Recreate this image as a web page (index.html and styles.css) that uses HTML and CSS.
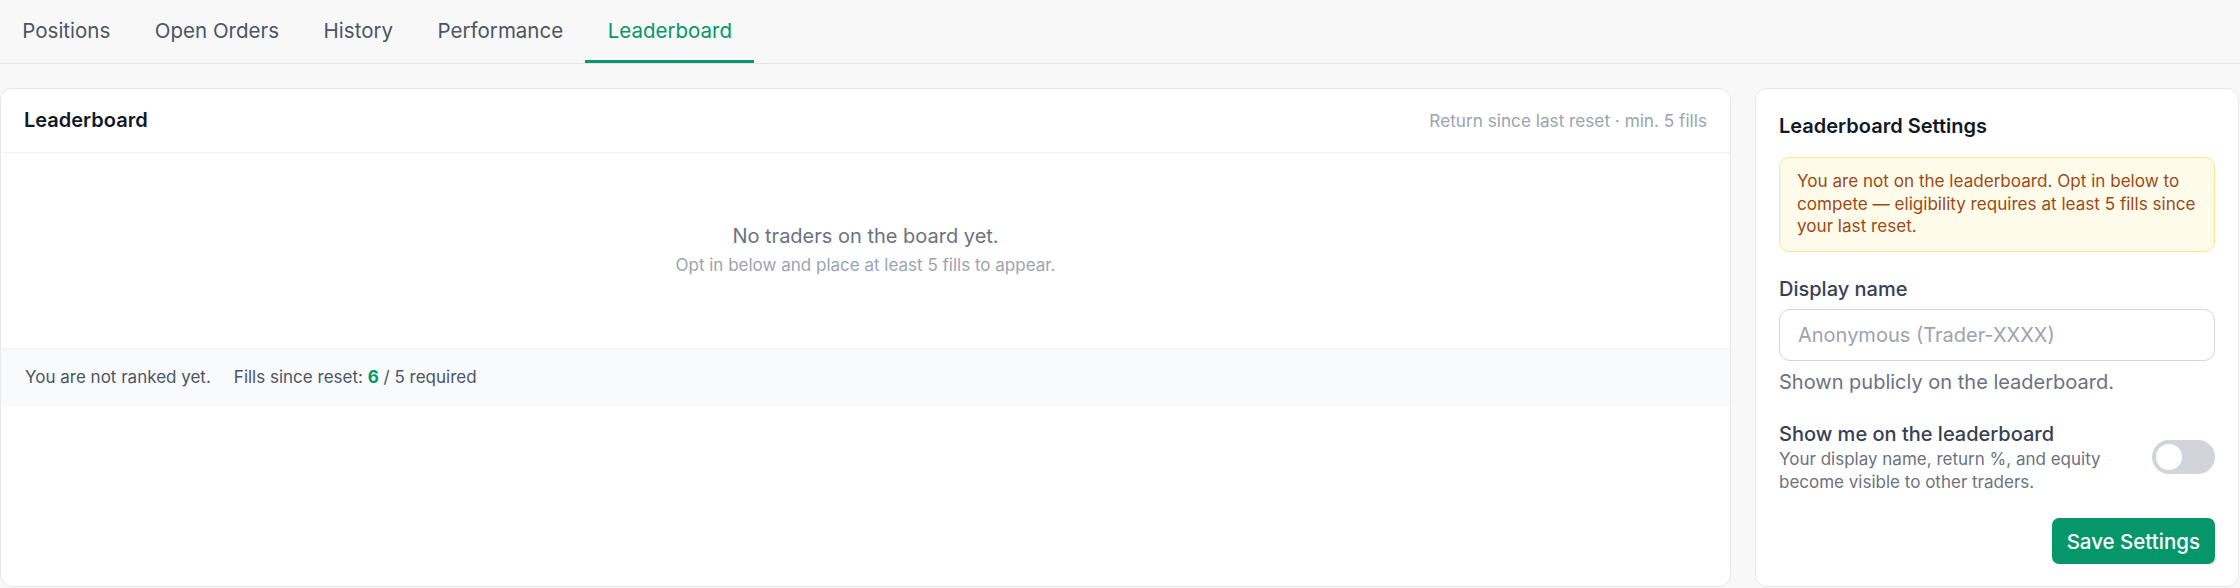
FILE: index.html
```html
<!DOCTYPE html>
<html lang="en">
<head>
<meta charset="utf-8">
<title>Leaderboard</title>
<link rel="stylesheet" href="styles.css">
</head>
<body>
  <nav class="tabs">
    <button class="tab">Positions</button>
    <button class="tab">Open Orders</button>
    <button class="tab">History</button>
    <button class="tab">Performance</button>
    <button class="tab tab-active">Leaderboard</button>
  </nav>

  <main class="layout">
    <section class="card board">
      <header class="board-head">
        <h2 class="card-title">Leaderboard</h2>
        <span class="board-meta">Return since last reset · min. 5 fills</span>
      </header>
      <div class="empty">
        <p class="empty-title">No traders on the board yet.</p>
        <p class="empty-sub">Opt in below and place at least 5 fills to appear.</p>
      </div>
      <div class="rank-strip">
        <span>You are not ranked yet.</span>
        <span>Fills since reset: <strong class="fills-ok">6</strong> / 5 required</span>
      </div>
    </section>

    <aside class="card settings">
      <h2 class="card-title">Leaderboard Settings</h2>
      <div class="notice">You are not on the leaderboard. Opt in below to compete — eligibility requires at least 5 fills since your last reset.</div>

      <label class="field-label" for="display-name">Display name</label>
      <input class="field-input" id="display-name" type="text" placeholder="Anonymous (Trader-XXXX)">
      <p class="field-help">Shown publicly on the leaderboard.</p>

      <div class="opt-row">
        <div class="opt-text">
          <div class="opt-title">Show me on the leaderboard</div>
          <div class="opt-desc">Your display name, return %, and equity become visible to other traders.</div>
        </div>
        <span class="switch" role="switch" aria-checked="false"><span class="switch-knob"></span></span>
      </div>

      <div class="actions">
        <button class="btn-save">Save Settings</button>
      </div>
    </aside>
  </main>
</body>
</html>
```

FILE: styles.css
```css
* {
  box-sizing: border-box;
}

html,
body {
  margin: 0;
  padding: 0;
}

body {
  background: #f8f8f8;
  font-family: Inter, "Noto Sans", "Liberation Sans", sans-serif;
  color: #111827;
  height: 588px;
  overflow: hidden;
}

p,
h2 {
  margin: 0;
}

/* ---- tab bar ---- */
.tabs {
  display: flex;
  height: 64px;
  border-bottom: 1px solid #e4e4e4;
  background: #f8f8f8;
}

.tab {
  display: flex;
  align-items: center;
  padding: 0 22.3px;
  border: 0;
  border-bottom: 3px solid transparent;
  background: none;
  font-family: inherit;
  font-size: 20.5px;
  color: #4b5563;
  cursor: pointer;
}

.tab-active {
  color: #059669;
  border-bottom-color: #059669;
}

/* ---- page grid ---- */
.layout {
  display: grid;
  grid-template-columns: 1fr 484px;
  gap: 24px;
  padding: 24px 1px 0 0;
  align-items: stretch;
}

.card {
  background: #fff;
  border: 1px solid #e5e7eb;
  border-radius: 12px;
  height: 499px;
}

.card-title {
  font-size: 20px;
  font-weight: 600;
  line-height: 28px;
  color: #111827;
}

/* ---- leaderboard card ---- */
.board {
  display: flex;
  flex-direction: column;
  overflow: hidden;
}

.board-head {
  display: flex;
  align-items: center;
  justify-content: space-between;
  padding: 17px 23px 18px;
  border-bottom: 1px solid #f1f2f4;
}

.board-meta {
  font-size: 17.2px;
  color: #9ca3af;
}

.empty {
  padding: 69px 24px 71px;
  text-align: center;
}

.empty-title {
  font-size: 20px;
  line-height: 28px;
  color: #6b7280;
}

.empty-sub {
  margin-top: 3px;
  font-size: 17px;
  line-height: 24px;
  color: #9ca3af;
}

.rank-strip {
  display: flex;
  gap: 23px;
  padding: 15px 24px 16px;
  background: #f8fafc;
  border-top: 1px solid #f1f5f9;
  font-size: 17px;
  line-height: 26px;
  color: #4b5563;
}

.fills-ok {
  color: #059669;
  font-weight: 700;
}

/* ---- settings card ---- */
.settings {
  padding: 23px 23px 22px;
  display: flex;
  flex-direction: column;
}

.notice {
  margin-top: 17px;
  padding: 12px 17px 13px;
  background: #fffbeb;
  border: 1px solid #fde68a;
  border-radius: 10px;
  font-size: 17.1px;
  line-height: 22.5px;
  color: #9c4a14;
}

.field-label {
  margin-top: 23px;
  font-size: 20px;
  font-weight: 500;
  line-height: 28px;
  color: #374151;
}

.field-input {
  margin-top: 6px;
  height: 54px;
  padding: 0 18px;
  border: 1.5px solid #d1d5db;
  border-radius: 11px;
  font-family: inherit;
  font-size: 20px;
  color: #111827;
  background: #fff;
}

.field-input::placeholder {
  color: #9ca3af;
}

.field-help {
  margin-top: 8px;
  font-size: 20px;
  line-height: 26px;
  color: #6b7280;
}

.opt-row {
  margin-top: 25px;
  display: flex;
  align-items: center;
  justify-content: space-between;
  gap: 16px;
}

.opt-title {
  font-size: 20px;
  font-weight: 500;
  line-height: 28px;
  color: #374151;
}

.opt-desc {
  font-size: 17px;
  line-height: 23px;
  color: #6b7280;
  max-width: 340px;
}

.switch {
  position: relative;
  flex: none;
  width: 63px;
  height: 34px;
  border-radius: 17px;
  background: #d1d5db;
}

.switch-knob {
  position: absolute;
  left: 4px;
  top: 4px;
  width: 26px;
  height: 26px;
  border-radius: 50%;
  background: #fff;
}

.actions {
  margin-top: 24px;
  display: flex;
  justify-content: flex-end;
}

.btn-save {
  height: 46px;
  padding: 0 15px;
  border: 0;
  border-radius: 7px;
  background: #059669;
  color: #fff;
  font-family: inherit;
  font-size: 20.5px;
  font-weight: 500;
  cursor: pointer;
}
```
